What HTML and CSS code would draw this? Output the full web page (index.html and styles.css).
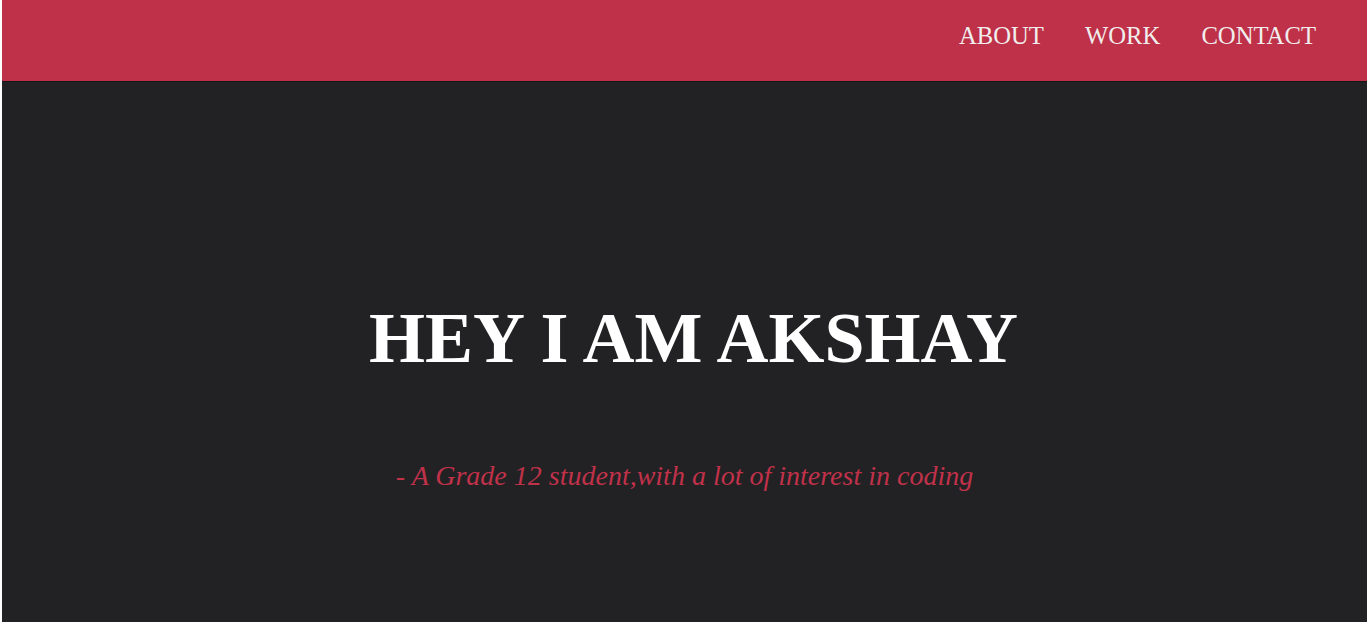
FILE: index.html
```html
<!DOCTYPE html>
<html lang="en">
<head>
<meta charset="utf-8">
<title>Akshay</title>
<link rel="stylesheet" href="styles.css">
</head>
<body>
<header class="topbar">
  <nav class="nav">
    <a class="nav-link" href="#about">ABOUT</a>
    <a class="nav-link" href="#work">WORK</a>
    <a class="nav-link" href="#contact">CONTACT</a>
  </nav>
</header>
<main class="hero">
  <h1 class="hero-title">HEY I AM AKSHAY</h1>
  <p class="hero-sub">- A Grade 12 student,with a lot of interest in coding</p>
</main>
</body>
</html>
```
FILE: styles.css
```css
html {
  background: #ffffff;
}
body {
  margin: 0 0 0 2px;
  height: 622px;
  overflow: hidden;
  font-family: "Liberation Serif", "Times New Roman", serif;
  background: #222224;
}
.topbar {
  box-sizing: border-box;
  height: 82px;
  background: #bf3148;
  border-bottom: 1px solid #161617;
  display: flex;
  justify-content: flex-end;
  align-items: flex-start;
  padding: 24px 51px 0 0;
}
.nav {
  display: flex;
  gap: 41px;
}
.nav-link {
  color: #f0eeee;
  text-decoration: none;
  font-size: 24.7px;
  line-height: 1;
}
.hero {
  display: flex;
  flex-direction: column;
  align-items: center;
  padding-top: 220px;
}
.hero-title {
  margin: 0;
  padding-left: 18px;
  color: #ffffff;
  font-size: 72px;
  line-height: 72px;
  font-weight: bold;
}
.hero-sub {
  margin: 88px 0 0;
  color: #c0314a;
  font-style: italic;
  font-size: 28px;
  line-height: 28px;
}
```
